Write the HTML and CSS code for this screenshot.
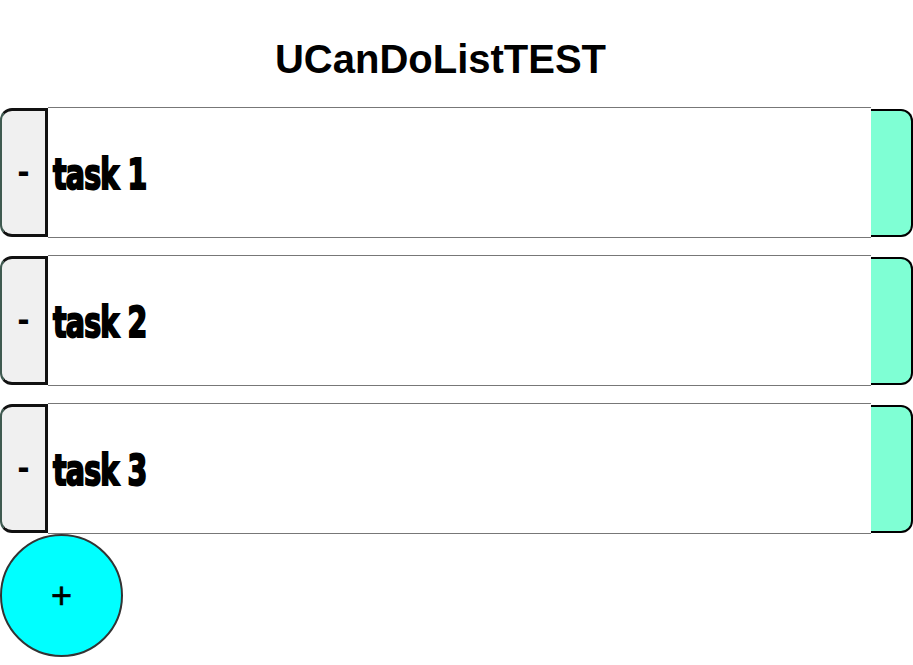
FILE: index.html
```html
<!DOCTYPE html>
<html>
<head>
<meta charset="utf-8">
<link rel="stylesheet" href="styles.css">
</head>
<body>
<h1 class="title">UCanDoListTEST</h1>
<div class="list">
  <div class="row">
    <button class="remove">-</button>
    <div class="task"><span class="task-text">task 1</span></div>
    <div class="done"></div>
  </div>
  <div class="row">
    <button class="remove">-</button>
    <div class="task"><span class="task-text">task 2</span></div>
    <div class="done"></div>
  </div>
  <div class="row">
    <button class="remove">-</button>
    <div class="task"><span class="task-text">task 3</span></div>
    <div class="done"></div>
  </div>
</div>
<button class="add">+</button>
</body>
</html>
```
FILE: styles.css
```css
body {
  margin: 0;
  font-family: "Liberation Sans", Arial, sans-serif;
  background: #fff;
}
.title {
  font-size: 40px;
  font-weight: bold;
  text-align: center;
  margin: 36px 0 25px 0;
  padding-right: 32px;
  line-height: 46px;
}
.list {
  display: flex;
  flex-direction: column;
  gap: 17px;
}
.row {
  display: flex;
  align-items: center;
  height: 131px;
}
.remove {
  box-sizing: border-box;
  width: 48px;
  height: 129px;
  margin: 0;
  padding: 0 0 4px 0;
  background: #f0f0f0;
  border: 3px solid #111;
  border-left: 2px solid #3f5a50;
  border-radius: 12px 0 0 12px;
  font-family: "Liberation Sans", Arial, sans-serif;
  font-weight: bold;
  font-size: 36px;
  color: #000;
}
.task {
  box-sizing: border-box;
  flex: 1;
  height: 131px;
  border-top: 1px solid #777;
  border-bottom: 1px solid #777;
  display: flex;
  align-items: center;
  padding-left: 5px;
  background: #fff;
}
.task-text {
  font-family: "Liberation Sans Narrow", "DejaVu Sans Condensed", sans-serif;
  font-stretch: condensed;
  font-weight: bold;
  font-size: 42px;
  display: inline-block;
  transform: scaleX(0.75);
  transform-origin: left center;
  letter-spacing: -1px;
  -webkit-text-stroke: 2px #000;
  padding-top: 4px;
}
.done {
  box-sizing: border-box;
  width: 42px;
  height: 128px;
  background: #7fffd4;
  border: 2px solid #000;
  border-left: none;
  border-radius: 0 12px 12px 0;
}
.add {
  display: block;
  box-sizing: border-box;
  width: 123px;
  height: 123px;
  margin: 0;
  padding: 0;
  border-radius: 50%;
  background: #00ffff;
  border: 2px solid #333;
  font-family: "Liberation Sans", Arial, sans-serif;
  font-size: 36px;
  -webkit-text-stroke: 0.6px #000;
  color: #000;
}
```
